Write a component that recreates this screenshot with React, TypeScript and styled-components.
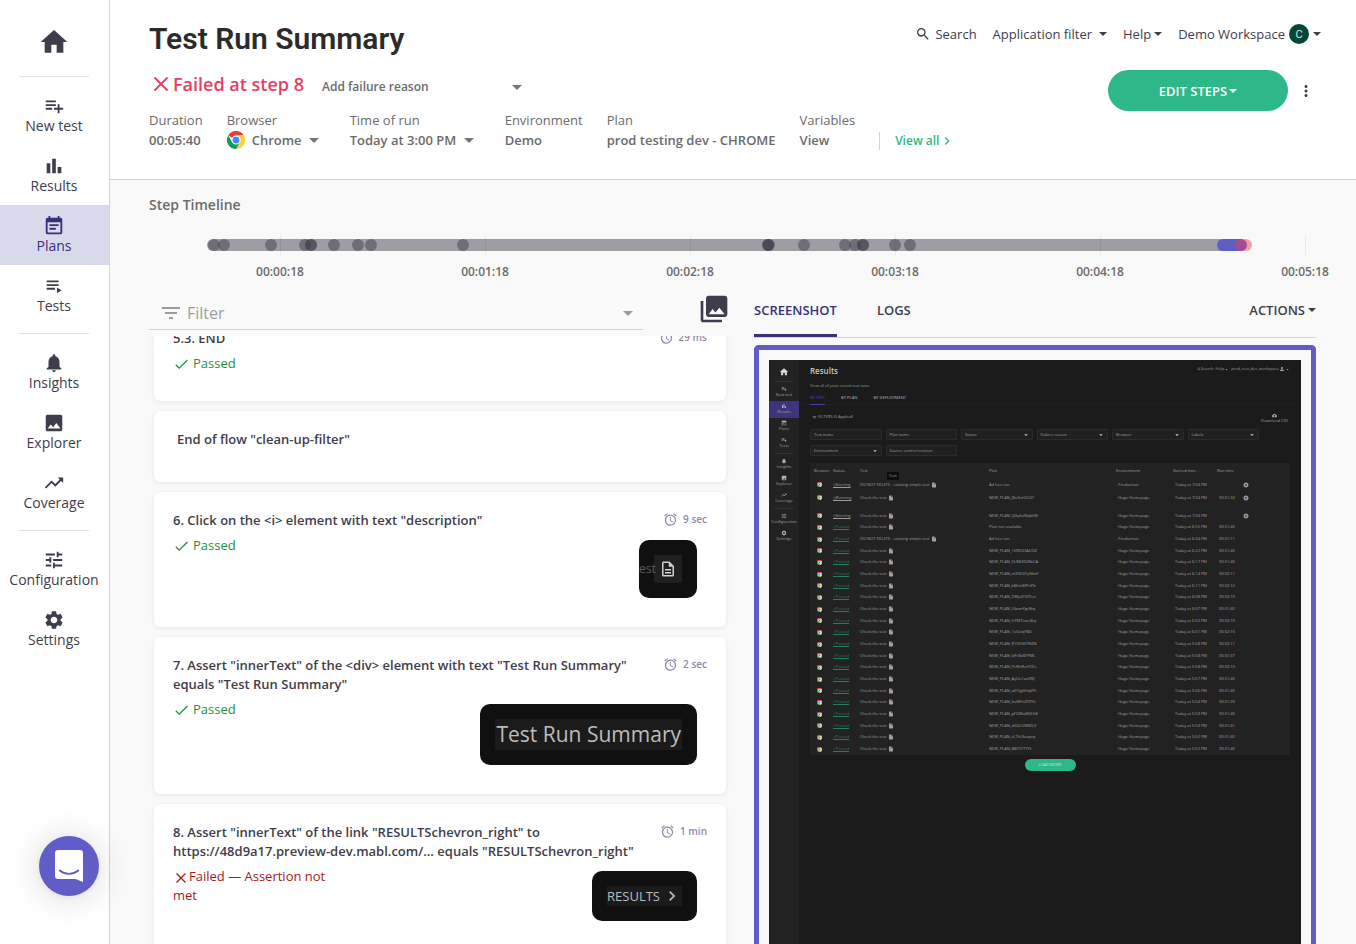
import React, { useLayoutEffect, useRef } from "react";
import styled, { createGlobalStyle, css } from "styled-components";
import {
  MdAccessAlarm,
  MdArrowDropDown,
  MdBarChart,
  MdCancel,
  MdChevronRight,
  MdCloudDownload,
  MdEventNote,
  MdFilterList,
  MdHome,
  MdImage,
  MdInsertDriveFile,
  MdMoreVert,
  MdNotifications,
  MdOutlineDescription,
  MdPerson,
  MdPhotoLibrary,
  MdPlaylistAdd,
  MdSearch,
  MdSettings,
  MdTrendingUp,
  MdTune,
} from "react-icons/md";

const color = {
  ink: "#3f3d4b",
  grey: "#6b6b6b",
  line: "#d4d4d6",
  page: "#f9f9f9",
  indigo: "#35317f",
  violet: "#615dc8",
  green: "#2eb788",
  pass: "#1a9140",
  fail: "#a31b1b",
  alert: "#e93c62",
};

const GlobalStyle = createGlobalStyle`
  * { box-sizing: border-box; }
  body {
    margin: 0;
    background: ${color.page};
    color: ${color.ink};
    font-family: "Open Sans", "Noto Sans", sans-serif;
    font-size: 13px;
  }
  button, input, select { font: inherit; color: inherit; }
  h1, h2, h3, p, ul, ol, dl, dd, figure { margin: 0; padding: 0; }
  ul, ol { list-style: none; }
  svg { display: block; flex: none; }
`;

/* ---------- shell ---------- */

const Shell = styled.div`
  display: grid;
  grid-template-columns: 110px minmax(0, 1fr);
  height: 100vh;
  overflow: hidden;
`;

const Sidebar = styled.nav`
  display: flex;
  flex-direction: column;
  background: #fff;
  border-right: 1px solid ${color.line};
`;

const HomeLink = styled.a`
  display: flex;
  justify-content: center;
  padding: 26px 1px 10px 0;
  color: ${color.ink};
`;

const Separator = styled.hr`
  width: 70px;
  height: 1px;
  margin: 8px 20px 8px 19px;
  border: 0;
  background: #e2e2e4;
`;

const NavLink = styled.a<{ $active?: boolean }>`
  display: flex;
  flex-direction: column;
  align-items: center;
  padding: 10px 1px 10px 0;
  font-size: 14px;
  line-height: 18px;
  text-decoration: none;
  white-space: nowrap;
  color: ${(p) => (p.$active ? color.indigo : color.ink)};
  background: ${(p) => (p.$active ? "#d9d9ec" : "transparent")};
`;

const ChatLauncher = styled.button`
  position: fixed;
  left: 39px;
  bottom: 48px;
  display: flex;
  align-items: center;
  justify-content: center;
  width: 60px;
  height: 60px;
  padding: 0;
  border: 0;
  border-radius: 50%;
  background: ${color.violet};
  box-shadow: 0 1px 6px rgba(0, 0, 0, 0.06), 0 2px 32px rgba(0, 0, 0, 0.16);
`;

const Main = styled.main`
  display: flex;
  flex-direction: column;
  min-width: 0;
  min-height: 0;
`;

/* ---------- header ---------- */

const Header = styled.header`
  min-height: 180px;
  padding: 18px 35px 28px 39px;
  background: #fff;
  border-bottom: 1px solid ${color.line};
`;

const TitleRow = styled.div`
  display: flex;
  align-items: flex-start;
  justify-content: space-between;
`;

const Title = styled.h1`
  font-family: Roboto, "Open Sans", sans-serif;
  font-size: 30px;
  line-height: 42px;
  font-weight: 600;
  color: #2b2b2b;
  white-space: nowrap;
`;

const StatusRow = styled.div`
  display: flex;
  align-items: flex-start;
  justify-content: space-between;
  height: 40px;
  margin-top: 10px;
`;

const StatusGroup = styled.div`
  display: flex;
  align-items: center;
  height: 24px;
  margin-top: 2px;
`;

const RunStatus = styled.p`
  display: flex;
  align-items: center;
  gap: 4px;
  padding-left: 4px;
  margin-right: 18px;
  font-size: 18px;
  line-height: 24px;
  font-weight: 600;
  color: ${color.alert};
  white-space: nowrap;
`;

const SelectBox = styled.span<{ $wide?: boolean }>`
  position: relative;
  display: inline-flex;
  align-items: center;
  width: ${(p) => (p.$wide ? "207px" : "auto")};
  padding-top: ${(p) => (p.$wide ? "6px" : "0")};
  color: ${color.grey};
  > svg {
    position: absolute;
    right: 0;
    color: #757575;
    pointer-events: none;
  }
`;

const Select = styled.select<{ $small?: boolean }>`
  flex: 1 0 auto;
  height: 20px;
  padding: 0 24px 0 0;
  border: 0;
  background: none;
  appearance: none;
  font-size: ${(p) => (p.$small ? 12 : 13)}px;
  line-height: 20px;
  font-weight: 600;
`;

const Facts = styled.dl`
  display: flex;
  gap: 24px;
  color: ${color.grey};
  line-height: 20px;
  white-space: nowrap;
  dd {
    display: flex;
    align-items: center;
    gap: 7px;
    height: 20px;
    font-weight: 600;
  }
`;

const ViewAll = styled.a`
  display: flex;
  align-items: center;
  align-self: flex-end;
  height: 18px;
  padding-left: 15px;
  border-left: 1px solid ${color.line};
  font-size: 12px;
  font-weight: 600;
  color: ${color.green};
  text-decoration: none;
`;

const TopNav = styled.nav`
  display: flex;
  align-items: center;
  gap: 16px;
  height: 22px;
  margin-top: 5px;
`;

const TopLink = styled.button<{ $gap?: number }>`
  display: flex;
  align-items: center;
  gap: ${(p) => p.$gap ?? 4}px;
  padding: 0;
  border: 0;
  background: none;
  white-space: nowrap;
`;

const Caret = styled.span`
  border: 4px solid transparent;
  border-top-color: currentColor;
  border-bottom: 0;
`;

const Avatar = styled.span`
  display: flex;
  align-items: center;
  justify-content: center;
  width: 20px;
  height: 20px;
  border-radius: 50%;
  background: #04473a;
  color: #d6e4df;
  font-family: Roboto, sans-serif;
  font-size: 11px;
`;

const Actions = styled.div`
  display: flex;
  align-items: center;
  gap: 9px;
  margin-right: 6px;
`;

const EditSteps = styled.button`
  display: flex;
  align-items: center;
  justify-content: center;
  gap: 2px;
  width: 180px;
  height: 41px;
  border: 0;
  border-radius: 21px;
  background: ${color.green};
  color: #fff;
  font-size: 13px;
  font-weight: 600;
`;

const IconButton = styled.button`
  display: flex;
  padding: 0;
  border: 0;
  background: none;
  color: ${color.ink};
`;

/* ---------- timeline ---------- */

const Timeline = styled.section`
  padding: 15px 40px 0 39px;
`;

const SectionTitle = styled.h2`
  margin-bottom: 10px;
  font-size: 14px;
  line-height: 20px;
  font-weight: 600;
  color: ${color.grey};
`;

const Chart = styled.svg`
  width: 100%;
  height: 60px;
  overflow: visible;
  text {
    font-size: 12px;
    font-weight: 600;
    text-anchor: middle;
    fill: ${color.grey};
  }
`;

/* ---------- work area ---------- */

const Columns = styled.div`
  display: grid;
  grid-template-columns: minmax(0, 582fr) minmax(0, 562fr);
  gap: 23px;
  flex: 1;
  min-height: 0;
  padding: 7px 40px 0 39px;
`;

const Column = styled.section`
  display: flex;
  flex-direction: column;
  min-height: 0;
`;

const ListTools = styled.div`
  display: flex;
  align-items: flex-start;
  justify-content: space-between;
  height: 44px;
  padding: 1px 1px 0 0;
`;

const FilterBox = styled.label`
  display: flex;
  align-items: center;
  flex: 0 0 85%;
  height: 37px;
  padding: 3px 3px 0 10px;
  border-bottom: 1px solid ${color.line};
  background: #fafafa;
  color: #9b9b9b;
`;

const FilterInput = styled.input`
  flex: 1;
  min-width: 0;
  height: 24px;
  padding: 0 4px;
  border: 0;
  background: none;
  font-size: 16px;
  &::placeholder {
    color: #9e9e9e;
    opacity: 1;
  }
`;

const StepList = styled.ol`
  display: flex;
  flex-direction: column;
  flex: 1;
  gap: 10px;
  min-height: 0;
  padding: 0 5px 10px;
  overflow-y: auto;
  scrollbar-width: none;
`;

const StepCard = styled.li`
  flex: none;
  padding: 19px;
  border-radius: 6px;
  background: #fff;
  box-shadow: 0 1px 4px rgba(0, 0, 0, 0.08);
`;

const FlowEnd = styled.p`
  min-height: 33px;
  padding-left: 4px;
  line-height: 19px;
  font-weight: 600;
`;

const StepHead = styled.div`
  display: flex;
  align-items: flex-start;
  justify-content: space-between;
  gap: 24px;
`;

const StepTitle = styled.h3`
  font-size: 13px;
  line-height: 19px;
  font-weight: 600;
`;

const Duration = styled.span`
  display: flex;
  align-items: center;
  gap: 5px;
  height: 16px;
  font-size: 10px;
  font-weight: 600;
  color: #8e8aaa;
  white-space: nowrap;
`;

const StepBody = styled.div`
  display: flex;
  align-items: flex-start;
  justify-content: space-between;
`;

const Result = styled.p<{ $failed?: boolean }>`
  width: 170px;
  margin: 6px 0 9px;
  line-height: 19px;
  color: ${(p) => (p.$failed ? color.fail : color.pass)};
  svg {
    display: inline-block;
    margin: 0 ${(p) => (p.$failed ? 2 : 4)}px 0 2px;
    vertical-align: -3px;
  }
`;

const Snapshot = styled.div`
  position: relative;
  margin: 10px;
  padding: 15px;
  border-radius: 10px;
  overflow: hidden;
  background: #101010;
`;

const SnapshotText = styled.div<{ $large?: boolean }>`
  display: flex;
  align-items: center;
  gap: 2px;
  background: #1b1b1b;
  color: #bdbdbd;
  white-space: nowrap;
  ${(p) =>
    p.$large
      ? css`
          padding: 0 1px;
          font-size: 21px;
          line-height: 31px;
        `
      : css`
          font-size: 13px;
          line-height: 18px;
        `}
`;

const SnapshotIcon = styled.div`
  display: flex;
  align-items: center;
  justify-content: center;
  width: 28px;
  height: 28px;
  background: #202020;
  color: #d0d0d0;
`;

const SnapshotEdge = styled.span`
  position: absolute;
  top: 20px;
  left: 0;
  font-size: 12px;
  line-height: 18px;
  color: #5c5c5c;
`;

const Tabs = styled.div`
  display: flex;
  gap: 40px;
  height: 46px;
  flex: none;
  margin-bottom: 7px;
  border-bottom: 1px solid ${color.line};
`;

const Tab = styled.button<{ $active?: boolean; $end?: boolean }>`
  display: flex;
  align-items: center;
  gap: 3px;
  margin-left: ${(p) => (p.$end ? "auto" : "0")};
  padding: 0 0 7px;
  border: 0;
  border-bottom: 3px solid ${(p) => (p.$active ? color.indigo : "transparent")};
  background: none;
  font-size: 13px;
  font-weight: 600;
  color: ${(p) => (p.$active ? color.indigo : color.ink)};
`;

const Frame = styled.figure`
  display: flex;
  flex: 1;
  min-height: 0;
  padding: 10px 10px 0;
  border: 5px solid ${color.violet};
  border-bottom: 0;
  border-radius: 5px 5px 0 0;
`;

/* ---------- captured page ---------- */

const Capture = styled.div`
  display: grid;
  grid-template-columns: 30px minmax(0, 1fr);
  flex: 1;
  overflow: hidden;
  background: #1b1b1b;
  color: #a0a0a0;
  font-size: 4px;
  line-height: 6px;
  white-space: nowrap;
`;

const CaptureSide = styled.div`
  display: flex;
  flex-direction: column;
  align-items: stretch;
  padding-top: 7px;
  background: #222;
`;

const CaptureHome = styled.span`
  display: flex;
  justify-content: center;
  height: 14px;
  color: #d8d8d8;
`;

const CaptureRule = styled.span`
  height: 1px;
  margin: 0 5px;
  background: #303030;
`;

const CaptureGroup = styled.div<{ $height: number }>`
  display: grid;
  grid-auto-rows: 1fr;
  height: ${(p) => p.$height}px;
  margin: 2px 0;
`;

const CaptureItem = styled.span<{ $active?: boolean }>`
  display: flex;
  flex-direction: column;
  align-items: center;
  justify-content: center;
  background: ${(p) => (p.$active ? "#3a357c" : "transparent")};
  svg {
    color: #b4b4b4;
  }
`;

const CaptureMain = styled.div`
  padding: 6px 11px 0;
`;

const CaptureTop = styled.div`
  display: flex;
  align-items: flex-start;
  justify-content: space-between;
  height: 17px;
`;

const CaptureTitle = styled.span`
  font-size: 8px;
  line-height: 10px;
  font-weight: 600;
  color: #c4c4c4;
`;

const CaptureLinks = styled.span`
  display: flex;
  align-items: center;
  gap: 2px;
  span {
    display: flex;
    align-items: center;
  }
`;

const CaptureTabs = styled.div`
  display: flex;
  gap: 16px;
  height: 10px;
  margin: 6px -11px 0;
  padding-left: 11px;
  border-bottom: 1px solid #202020;
`;

const CaptureTab = styled.span<{ $active?: boolean }>`
  height: 10px;
  font-weight: 600;
  color: ${(p) => (p.$active ? "#45419c" : "#9a9a9a")};
  border-bottom: 1px solid ${(p) => (p.$active ? "#45419c" : "transparent")};
`;

const CaptureFilterHead = styled.div`
  display: flex;
  align-items: flex-start;
  justify-content: space-between;
  height: 16px;
  margin-top: 8px;
  padding: 0 2px;
`;

const CaptureSummary = styled.span`
  display: flex;
  align-items: center;
  gap: 1px;
  padding-top: 1px;
`;

const CaptureDownload = styled.span`
  display: flex;
  flex-direction: column;
  align-items: center;
`;

const CaptureFilters = styled.div`
  display: grid;
  grid-template-columns: repeat(6, 1fr);
  gap: 5px 4px;
  margin: 0 31px 7px 0;
`;

const CaptureField = styled.span`
  display: flex;
  align-items: center;
  justify-content: space-between;
  height: 11px;
  padding: 0 2px 0 3px;
  border: 1px solid #2b2b2a;
  border-radius: 1px;
  background: #20201f;
`;

const CaptureTable = styled.table`
  position: relative;
  display: grid;
  grid-template-rows: 15px 13px 19px repeat(21, 1fr);
  height: 292px;
  padding-left: 4px;
  background: #222;
  thead,
  tbody {
    display: contents;
  }
  tr {
    display: grid;
    grid-template-columns: 19fr 27fr 129fr 127fr 57fr 44fr 24fr 49fr;
    align-items: center;
  }
  tbody tr:nth-child(2) {
    padding-bottom: 6px;
  }
  th,
  td {
    display: flex;
    align-items: center;
    gap: 2px;
    padding: 0;
    font-weight: 400;
  }
  td:nth-child(1) {
    padding-left: 3px;
  }
  td:nth-child(n + 5) {
    padding-left: 2px;
  }
`;

const CaptureStatus = styled.span<{ $passed: boolean }>`
  color: ${(p) => (p.$passed ? "#23805f" : "#9a9a9a")};
  text-decoration: underline;
`;

const CaptureTip = styled.span`
  position: absolute;
  top: 9px;
  left: 16%;
  padding: 1px 2px;
  border-radius: 1px;
  background: #0c0c0c;
`;

const CaptureMore = styled.span`
  display: block;
  width: 51px;
  margin: 4px auto 0;
  border-radius: 6px;
  background: ${color.green};
  color: #c4ecde;
  line-height: 12px;
  text-align: center;
`;

/* ---------- drawings ---------- */

const TestsIcon = () => (
  <svg width="22" height="22" viewBox="0 0 24 24" fill="currentColor">
    <path d="M4 6h13v2H4zM4 10h13v2H4zM4 14h9v2H4zM15.200 13.500v6.500l5-3.250z" />
  </svg>
);

const ChromeIcon = ({ size }: { size: number }) => (
  <svg width={size} height={size} viewBox="0 0 48 48">
    <circle cx="24" cy="24" r="23" fill="#fff" />
    <path d="M3.200 12A24 24 0 0 1 44.800 12H24a12 12 0 0 0-10.400 6z" fill="#db4437" />
    <path d="M44.800 12A24 24 0 0 1 24 48L34.400 30A12 12 0 0 0 24 12z" fill="#ffcd40" />
    <path d="M3.200 12 13.600 30A12 12 0 0 0 34.400 30L24 48A24 24 0 0 1 3.200 12z" fill="#0f9d58" />
    <circle cx="24" cy="24" r="11.500" fill="#f1f1f1" />
    <circle cx="24" cy="24" r="9" fill="#4285f4" />
  </svg>
);

const CrossIcon = () => (
  <svg width="16" height="16" viewBox="0 0 16 16" fill="none" stroke="currentColor" strokeWidth="1.800">
    <path d="M1.500 1.500l13 13M14.500 1.500l-13 13" />
  </svg>
);

const CheckIcon = () => (
  <svg width="14" height="14" viewBox="0 0 14 14" fill="none" stroke="currentColor" strokeWidth="1.300">
    <path d="M.8 7.800l3.400 3.400L12.400 3" />
  </svg>
);

const FailIcon = () => (
  <svg width="12" height="12" viewBox="0 0 12 12" fill="none" stroke="currentColor" strokeWidth="1.300">
    <path d="M1.500 1.500l9 9M10.500 1.500l-9 9" />
  </svg>
);

const ChatIcon = () => (
  <svg width="28" height="32" viewBox="0 0 28 32">
    <path d="M3 0h22a3 3 0 0 1 3 3v29l-7.500-3H3a3 3 0 0 1-3-3V3a3 3 0 0 1 3-3z" fill="#fff" />
    <path d="M4.700 20.500c5.500 4.400 13.100 4.400 18.600 0" fill="none" stroke={color.violet} strokeWidth="1.800" strokeLinecap="round" />
  </svg>
);

/* ---------- data ---------- */

const navGroups = [
  [
    { label: "New test", icon: MdPlaylistAdd },
    { label: "Results", icon: MdBarChart },
    { label: "Plans", icon: MdEventNote },
    { label: "Tests", icon: TestsIcon },
  ],
  [
    { label: "Insights", icon: MdNotifications },
    { label: "Explorer", icon: MdImage },
    { label: "Coverage", icon: MdTrendingUp },
  ],
  [
    { label: "Configuration", icon: MdTune },
    { label: "Settings", icon: MdSettings },
  ],
];

const TRACK = 1167;
const at = (x: number) => `${(x / TRACK) * 100}%`;
const ticks = [
  { x: 131, label: "00:00:18" },
  { x: 336, label: "00:01:18" },
  { x: 541, label: "00:02:18" },
  { x: 746, label: "00:03:18" },
  { x: 951, label: "00:04:18" },
  { x: 1156, label: "00:05:18" },
];
const marks = [65, 75, 122, 156, 162, 162, 185, 209, 222, 314, 619, 619, 620, 655, 696, 706, 714, 714, 746, 761];

const runs: [string, string, string, string, string, string][] = [
  ["Starting", "DO NOT DELETE - existing simple test", "Ad hoc run", "Production", "7:04 PM", ""],
  ["Running", "Check the test", "NEW_PLAN_J8u3nhDLS7", "Hugo Homepage", "7:04 PM", "00:01:34"],
  ["Starting", "Check the test", "NEW_PLAN_QGpb28qbhM", "Hugo Homepage", "7:04 PM", ""],
  ["Passed", "Check the test", "Plan not available", "Hugo Homepage", "6:55 PM", "00:01:40"],
  ["Passed", "DO NOT DELETE - existing simple test", "Ad hoc run", "Production", "6:34 PM", "00:01:11"],
  ["Passed", "Check the test", "NEW_PLAN_1VROS3AUOZ", "Hugo Homepage", "6:22 PM", "00:01:40"],
  ["Passed", "Check the test", "NEW_PLAN_KUNf4928bUA", "Hugo Homepage", "6:17 PM", "00:01:40"],
  ["Passed", "Check the test", "NEW_PLAN_m9062DpNmF", "Hugo Homepage", "6:14 PM", "00:02:11"],
  ["Passed", "Check the test", "NEW_PLAN_bMoh8fPnPb", "Hugo Homepage", "6:11 PM", "00:02:12"],
  ["Passed", "Check the test", "NEW_PLAN_DWp4TGYLar", "Hugo Homepage", "6:08 PM", "00:02:10"],
  ["Passed", "Check the test", "NEW_PLAN_UbzmYgcNiq", "Hugo Homepage", "6:07 PM", "00:01:40"],
  ["Passed", "Check the test", "NEW_PLAN_HYMTLweBiq", "Hugo Homepage", "6:02 PM", "00:02:10"],
  ["Passed", "Check the test", "NEW_PLAN_1oVoIqYBU", "Hugo Homepage", "6:01 PM", "00:02:10"],
  ["Passed", "Check the test", "NEW_PLAN_R1VXGSYNZN", "Hugo Homepage", "5:58 PM", "00:02:11"],
  ["Passed", "Check the test", "NEW_PLAN_bfh9bBTPML", "Hugo Homepage", "5:58 PM", "00:01:37"],
  ["Passed", "Check the test", "NEW_PLAN_PeNhRoHTZo", "Hugo Homepage", "5:58 PM", "00:02:10"],
  ["Passed", "Check the test", "NEW_PLAN_AyUo1xz2WJ", "Hugo Homepage", "5:57 PM", "00:01:40"],
  ["Passed", "Check the test", "NEW_PLAN_wDQgSHqVFt", "Hugo Homepage", "5:56 PM", "00:01:40"],
  ["Passed", "Check the test", "NEW_PLAN_baWHvZ9YHi", "Hugo Homepage", "5:54 PM", "00:01:39"],
  ["Passed", "Check the test", "NEW_PLAN_gFOWw8KEG8", "Hugo Homepage", "5:53 PM", "00:01:40"],
  ["Passed", "Check the test", "NEW_PLAN_dSQLUNRZLV", "Hugo Homepage", "5:53 PM", "00:01:41"],
  ["Passed", "Check the test", "NEW_PLAN_sL7hUbaqnq", "Hugo Homepage", "5:52 PM", "00:01:40"],
  ["Passed", "Check the test", "NEW_PLAN_BBI7iTTYYt", "Hugo Homepage", "5:52 PM", "00:01:40"],
];

const captureFields: [string, boolean][] = [
  ["Test name", false],
  ["Plan name", false],
  ["Status", true],
  ["Failure reason", true],
  ["Browser", true],
  ["Labels", true],
  ["Environment", true],
  ["Source control revision", false],
];

/* ---------- parts ---------- */

function Step(props: { title: string; time: string; failed?: string; children?: React.ReactNode }) {
  return (
    <StepCard>
      <StepHead>
        <StepTitle>{props.title}</StepTitle>
        <Duration>
          <MdAccessAlarm size={15} />
          {props.time}
        </Duration>
      </StepHead>
      <StepBody>
        <Result $failed={!!props.failed}>
          {props.failed ? <FailIcon /> : <CheckIcon />}
          {props.failed ?? "Passed"}
        </Result>
        {props.children}
      </StepBody>
    </StepCard>
  );
}

function CapturedPage() {
  return (
    <Capture>
      <CaptureSide>
        <CaptureHome>
          <MdHome size={10} />
        </CaptureHome>
        {navGroups.map((group, i) => (
          <React.Fragment key={i}>
            <CaptureRule />
            <CaptureGroup $height={[67, 50, 33][i]}>
              {group.map(({ label, icon: Icon }) => (
                <CaptureItem key={label} $active={label === "Results"}>
                  {label === "Tests" ? <MdPlaylistAdd size={6} /> : <Icon size={6} />}
                  {label}
                </CaptureItem>
              ))}
            </CaptureGroup>
          </React.Fragment>
        ))}
      </CaptureSide>
      <CaptureMain>
        <CaptureTop>
          <CaptureTitle>Results</CaptureTitle>
          <CaptureLinks>
            <span>
              <MdSearch size={4} /> Search
            </span>
            <span>
              Help <MdArrowDropDown size={5} />
            </span>
            <span>
              prod_test_dev_workspace <MdPerson size={6} />
              <MdArrowDropDown size={5} />
            </span>
          </CaptureLinks>
        </CaptureTop>
        View all of your recent test runs.
        <CaptureTabs>
          <CaptureTab $active>BY TEST</CaptureTab>
          <CaptureTab>BY PLAN</CaptureTab>
          <CaptureTab>BY DEPLOYMENT</CaptureTab>
        </CaptureTabs>
        <CaptureFilterHead>
          <CaptureSummary>
            <MdFilterList size={5} /> FILTERS (0 Applied)
          </CaptureSummary>
          <CaptureDownload>
            <MdCloudDownload size={5} />
            Download CSV
          </CaptureDownload>
        </CaptureFilterHead>
        <CaptureFilters>
          {captureFields.map(([label, drop]) => (
            <CaptureField key={label}>
              {label}
              {drop && <MdArrowDropDown size={8} color="#d0d0d0" />}
            </CaptureField>
          ))}
        </CaptureFilters>
        <CaptureTable>
          <thead>
            <tr>
              <th>Browser</th>
              <th>Status</th>
              <th>
                Test
                <CaptureTip>Test</CaptureTip>
              </th>
              <th>Plan</th>
              <th>Environment</th>
              <th>Started time ↓</th>
              <th>Run time</th>
              <th />
            </tr>
          </thead>
          <tbody>
            {runs.map(([status, test, plan, env, start, time], i) => (
              <tr key={i}>
                <td>
                  <ChromeIcon size={5} />
                </td>
                <td>
                  <CaptureStatus $passed={status === "Passed"}>
                    {status === "Passed" ? "✓" : "◷"}
                    {status}
                  </CaptureStatus>
                </td>
                <td>
                  {test} <MdInsertDriveFile size={6} />
                </td>
                <td>{plan}</td>
                <td>{env}</td>
                <td>Today at {start}</td>
                <td>{time}</td>
                <td>{i < 3 && <MdCancel size={6} />}</td>
              </tr>
            ))}
          </tbody>
        </CaptureTable>
        <CaptureMore>LOAD MORE</CaptureMore>
      </CaptureMain>
    </Capture>
  );
}

export default function App() {
  const list = useRef<HTMLOListElement>(null);

  // The list opens scrolled past the top of the previous step.
  useLayoutEffect(() => {
    if (list.current) list.current.scrollTop = 26;
  }, []);

  return (
    <>
      <GlobalStyle />
      <Shell>
        <Sidebar>
          <HomeLink href="#home" aria-label="Home">
            <MdHome size={32} />
          </HomeLink>
          {navGroups.map((group, i) => (
            <React.Fragment key={i}>
              <Separator />
              {group.map(({ label, icon: Icon }) => (
                <NavLink key={label} href={`#${label}`} $active={label === "Plans"}>
                  <Icon size={22} />
                  {label}
                </NavLink>
              ))}
            </React.Fragment>
          ))}
          <ChatLauncher aria-label="Open chat">
            <ChatIcon />
          </ChatLauncher>
        </Sidebar>

        <Main>
          <Header>
            <TitleRow>
              <Title>Test Run Summary</Title>
              <TopNav>
                <TopLink>
                  <MdSearch size={16} />
                  Search
                </TopLink>
                <TopLink $gap={7}>
                  Application filter
                  <Caret />
                </TopLink>
                <TopLink $gap={3}>
                  Help
                  <Caret />
                </TopLink>
                <TopLink>
                  Demo Workspace
                  <Avatar>C</Avatar>
                  <Caret />
                </TopLink>
              </TopNav>
            </TitleRow>
            <StatusRow>
              <StatusGroup>
                <RunStatus>
                  <CrossIcon />
                  Failed at step 8
                </RunStatus>
                <SelectBox $wide>
                  <Select $small aria-label="Failure reason">
                    <option>Add failure reason</option>
                  </Select>
                  <MdArrowDropDown size={24} />
                </SelectBox>
              </StatusGroup>
              <Actions>
                <EditSteps>
                  EDIT STEPS
                  <Caret />
                </EditSteps>
                <IconButton aria-label="More actions">
                  <MdMoreVert size={18} />
                </IconButton>
              </Actions>
            </StatusRow>
            <Facts>
              <div>
                <dt>Duration</dt>
                <dd>00:05:40</dd>
              </div>
              <div>
                <dt>Browser</dt>
                <dd>
                  <ChromeIcon size={18} />
                  <SelectBox>
                    <Select aria-label="Browser">
                      <option>Chrome</option>
                    </Select>
                    <MdArrowDropDown size={24} />
                  </SelectBox>
                </dd>
              </div>
              <div>
                <dt>Time of run</dt>
                <dd>
                  <SelectBox>
                    <Select aria-label="Time of run">
                      <option>Today at 3:00 PM</option>
                    </Select>
                    <MdArrowDropDown size={24} />
                  </SelectBox>
                </dd>
              </div>
              <div>
                <dt>Environment</dt>
                <dd>Demo</dd>
              </div>
              <div>
                <dt>Plan</dt>
                <dd>prod testing dev - CHROME</dd>
              </div>
              <div>
                <dt>Variables</dt>
                <dd>View</dd>
              </div>
              <ViewAll href="#all">
                View all
                <MdChevronRight size={16} />
              </ViewAll>
            </Facts>
          </Header>

          <Timeline>
            <SectionTitle>Step Timeline</SectionTitle>
            <Chart>
              <rect x={at(58)} y="14" width={at(1020)} height="12" rx="6" fill="#9e9da3" />
              {ticks.map((t) => (
                <React.Fragment key={t.label}>
                  <rect x={at(t.x)} y="10" width="1" height="20" fill="#000" fillOpacity="0.06" />
                  <text x={at(t.x)} y="51">
                    {t.label}
                  </text>
                </React.Fragment>
              ))}
              {marks.map((x, i) => (
                <circle key={i} cx={at(x)} cy="20" r="6" fill={color.ink} fillOpacity="0.5" />
              ))}
              <rect x={at(1068)} y="14" width={at(30)} height="12" rx="6" fill={color.violet} />
              <circle cx={at(1097)} cy="20" r="6" fill="#f79bab" />
              <circle cx={at(1092)} cy="20" r="6" fill="#a44c92" />
            </Chart>
          </Timeline>

          <Columns>
            <Column>
              <ListTools>
                <FilterBox>
                  <MdFilterList size={24} />
                  <FilterInput placeholder="Filter" aria-label="Filter" />
                  <MdArrowDropDown size={24} />
                </FilterBox>
                <IconButton aria-label="Show screenshots">
                  <MdPhotoLibrary size={32} />
                </IconButton>
              </ListTools>
              <StepList ref={list}>
                <Step title="5.3. END" time="29 ms" />
                <StepCard>
                  <FlowEnd>End of flow "clean-up-filter"</FlowEnd>
                </StepCard>
                <Step title={'6. Click on the <i> element with text "description"'} time="9 sec">
                  <Snapshot>
                    <SnapshotEdge>est</SnapshotEdge>
                    <SnapshotIcon>
                      <MdOutlineDescription size={18} />
                    </SnapshotIcon>
                  </Snapshot>
                </Step>
                <Step
                  title={'7. Assert "innerText" of the <div> element with text "Test Run Summary" equals "Test Run Summary"'}
                  time="2 sec"
                >
                  <Snapshot>
                    <SnapshotText $large>Test Run Summary</SnapshotText>
                  </Snapshot>
                </Step>
                <Step
                  title={'8. Assert "innerText" of the link "RESULTSchevron_right" to https://48d9a17.preview-dev.mabl.com/... equals "RESULTSchevron_right"'}
                  time="1 min"
                  failed="Failed — Assertion not met"
                >
                  <Snapshot>
                    <SnapshotText>
                      RESULTS
                      <MdChevronRight size={20} />
                    </SnapshotText>
                  </Snapshot>
                </Step>
              </StepList>
            </Column>

            <Column>
              <Tabs>
                <Tab $active>SCREENSHOT</Tab>
                <Tab>LOGS</Tab>
                <Tab $end>
                  ACTIONS
                  <Caret />
                </Tab>
              </Tabs>
              <Frame>
                <CapturedPage />
              </Frame>
            </Column>
          </Columns>
        </Main>
      </Shell>
    </>
  );
}
